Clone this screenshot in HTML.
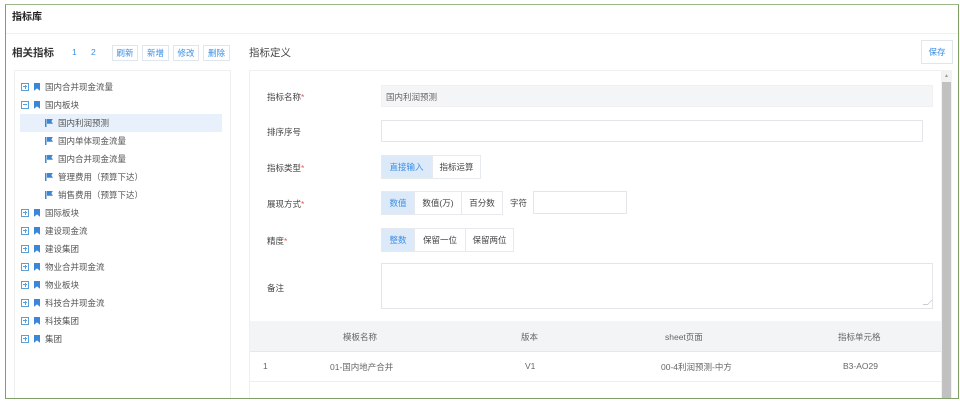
<!DOCTYPE html>
<html><head><meta charset="utf-8"><style>
*{box-sizing:border-box;margin:0;padding:0}
body{width:960px;height:402px;background:#fff;font-family:"Liberation Sans","Noto Sans CJK SC",sans-serif;font-size:9px;color:#555;position:relative;overflow:hidden}
.a{position:absolute}
.frame{left:5px;top:4px;width:954px;height:395px;border:1px solid #7f9f66;border-top-color:#9ab88a}
.btn{position:absolute;top:45px;height:16px;border:1px solid #dfe6ee;color:#3a8ee6;font-size:8.5px;line-height:14px;text-align:center;background:#fff}
.tr{position:absolute;height:18px;line-height:18px;font-size:8.5px;color:#555}
.pl{display:inline-block;width:8px;height:8px;border:1px solid #5aa0d8;vertical-align:middle;position:relative;margin-right:5px;top:-1px}
.pl:before{content:"";position:absolute;left:1px;top:2.5px;width:4px;height:1px;background:#5aa0d8}
.pl.p:after{content:"";position:absolute;left:2.5px;top:1px;width:1px;height:4px;background:#5aa0d8}
.bk{display:inline-block;width:6px;height:8px;background:#3b86d6;vertical-align:middle;margin-right:5px;position:relative;top:-1px;clip-path:polygon(0 0,100% 0,100% 100%,50% 70%,0 100%)}
.fl{display:inline-block;width:8px;height:8px;vertical-align:middle;margin-right:5px;position:relative;top:-1px;background:linear-gradient(#3b86d6,#3b86d6) 0 0/1.5px 8px no-repeat;}
.fl:after{content:"";position:absolute;left:1.5px;top:0;width:6.5px;height:5px;background:#3b86d6;clip-path:polygon(0 0,100% 0,75% 50%,100% 100%,0 100%)}
.lb{position:absolute;left:267px;font-size:8.5px;color:#444}
.lb i{color:#e55;font-style:normal}
.in{position:absolute;border:1px solid #e2e5ea;background:#fff}
.seg{position:absolute;height:24px;border:1px solid #e6e9ee;font-size:8.5px;line-height:22px;text-align:center;color:#444;background:#fff}
.seg.on{background:#dbe9f8;color:#3a8ee6}
.th{position:absolute;top:331px;font-size:8.5px;color:#666}
</style></head><body>
<div class="a frame"></div>
<div class="a" style="left:12px;top:8px;font-size:10px;font-weight:bold;color:#222">指标库</div>
<div class="a" style="left:6px;top:33px;width:952px;height:1px;background:#eef0f2"></div>

<div class="a" style="left:12px;top:45px;font-size:10.5px;font-weight:bold;color:#333">相关指标</div>
<div class="a" style="left:72px;top:47px;color:#3a8ee6;font-size:8.5px">1</div>
<div class="a" style="left:91px;top:47px;color:#3a8ee6;font-size:8.5px">2</div>
<div class="btn" style="left:112px;width:26px">刷新</div>
<div class="btn" style="left:142px;width:27px">新增</div>
<div class="btn" style="left:173px;width:26px">修改</div>
<div class="btn" style="left:203px;width:27px">删除</div>

<div class="a" style="left:14px;top:70px;width:217px;height:328px;border:1px solid #eef0f2;border-bottom:none"></div>
<div class="a" style="left:20px;top:114px;width:202px;height:18px;background:#e8f1fb"></div>
<div class="tr" style="left:21px;top:78px"><span class="pl p"></span><span class="bk"></span>国内合并现金流量</div>
<div class="tr" style="left:21px;top:96px"><span class="pl"></span><span class="bk"></span>国内板块</div>
<div class="tr" style="left:45px;top:114px"><span class="fl"></span>国内利润预测</div>
<div class="tr" style="left:45px;top:132px"><span class="fl"></span>国内单体现金流量</div>
<div class="tr" style="left:45px;top:150px"><span class="fl"></span>国内合并现金流量</div>
<div class="tr" style="left:45px;top:168px"><span class="fl"></span>管理费用（预算下达）</div>
<div class="tr" style="left:45px;top:186px"><span class="fl"></span>销售费用（预算下达）</div>
<div class="tr" style="left:21px;top:204px"><span class="pl p"></span><span class="bk"></span>国际板块</div>
<div class="tr" style="left:21px;top:222px"><span class="pl p"></span><span class="bk"></span>建设现金流</div>
<div class="tr" style="left:21px;top:240px"><span class="pl p"></span><span class="bk"></span>建设集团</div>
<div class="tr" style="left:21px;top:258px"><span class="pl p"></span><span class="bk"></span>物业合并现金流</div>
<div class="tr" style="left:21px;top:276px"><span class="pl p"></span><span class="bk"></span>物业板块</div>
<div class="tr" style="left:21px;top:294px"><span class="pl p"></span><span class="bk"></span>科技合并现金流</div>
<div class="tr" style="left:21px;top:312px"><span class="pl p"></span><span class="bk"></span>科技集团</div>
<div class="tr" style="left:21px;top:330px"><span class="pl p"></span><span class="bk"></span>集团</div>

<div class="a" style="left:249px;top:45px;font-size:10.5px;color:#444">指标定义</div>
<div class="btn" style="left:921px;top:40px;width:32px;height:24px;line-height:22px">保存</div>

<div class="a" style="left:249px;top:70px;width:692px;height:328px;border-top:1px solid #eef0f2;border-left:1px solid #eef0f2"></div>
<div class="a" style="left:941px;top:70px;width:11px;height:328px;background:#f2f2f2"></div>
<div class="a" style="left:942px;top:82px;width:9px;height:316px;background:#c1c1c1"></div>
<div class="a" style="left:944px;top:73px;font-size:5px;color:#999">▲</div>

<div class="lb" style="top:91px">指标名称<i>*</i></div>
<div class="in" style="left:381px;top:85px;width:552px;height:22px;background:#f4f5f7;border-color:#f0f1f3"></div>
<div class="a" style="left:386px;top:91px;font-size:8.5px;color:#666">国内利润预测</div>
<div class="lb" style="top:126px">排序序号</div>
<div class="in" style="left:381px;top:120px;width:542px;height:22px"></div>
<div class="lb" style="top:162px">指标类型<i>*</i></div>
<div class="seg on" style="left:381px;top:155px;width:51px">直接输入</div>
<div class="seg" style="left:432px;top:155px;width:49px">指标运算</div>
<div class="lb" style="top:198px">展现方式<i>*</i></div>
<div class="seg on" style="left:381px;top:191px;width:34px">数值</div>
<div class="seg" style="left:414px;top:191px;width:48px">数值(万)</div>
<div class="seg" style="left:461px;top:191px;width:42px">百分数</div>
<div class="a" style="left:510px;top:197px;font-size:8.5px;color:#444">字符</div>
<div class="in" style="left:533px;top:191px;width:94px;height:23px"></div>
<div class="lb" style="top:235px">精度<i>*</i></div>
<div class="seg on" style="left:381px;top:228px;width:34px">整数</div>
<div class="seg" style="left:414px;top:228px;width:52px">保留一位</div>
<div class="seg" style="left:465px;top:228px;width:49px">保留两位</div>
<div class="lb" style="top:282px">备注</div>
<div class="in" style="left:381px;top:263px;width:552px;height:46px"></div>
<div class="a" style="left:925px;top:300px;width:5px;height:5px;border-right:1px solid #999;border-bottom:1px solid #999;transform:skew(-45deg);opacity:.5"></div>

<div class="a" style="left:250px;top:321px;width:691px;height:31px;background:#f3f4f6;border-bottom:1px solid #e6e8eb"></div>
<div class="th" style="left:343px">模板名称</div>
<div class="th" style="left:521px">版本</div>
<div class="th" style="left:665px">sheet页面</div>
<div class="th" style="left:838px">指标单元格</div>
<div class="a" style="left:250px;top:381px;width:691px;height:1px;background:#eceef1"></div>
<div class="th" style="left:263px;top:361px">1</div>
<div class="th" style="left:330px;top:361px">01-国内地产合并</div>
<div class="th" style="left:525px;top:361px">V1</div>
<div class="th" style="left:661px;top:361px">00-4利润预测-中方</div>
<div class="th" style="left:843px;top:361px">B3-AO29</div>
</body></html>
